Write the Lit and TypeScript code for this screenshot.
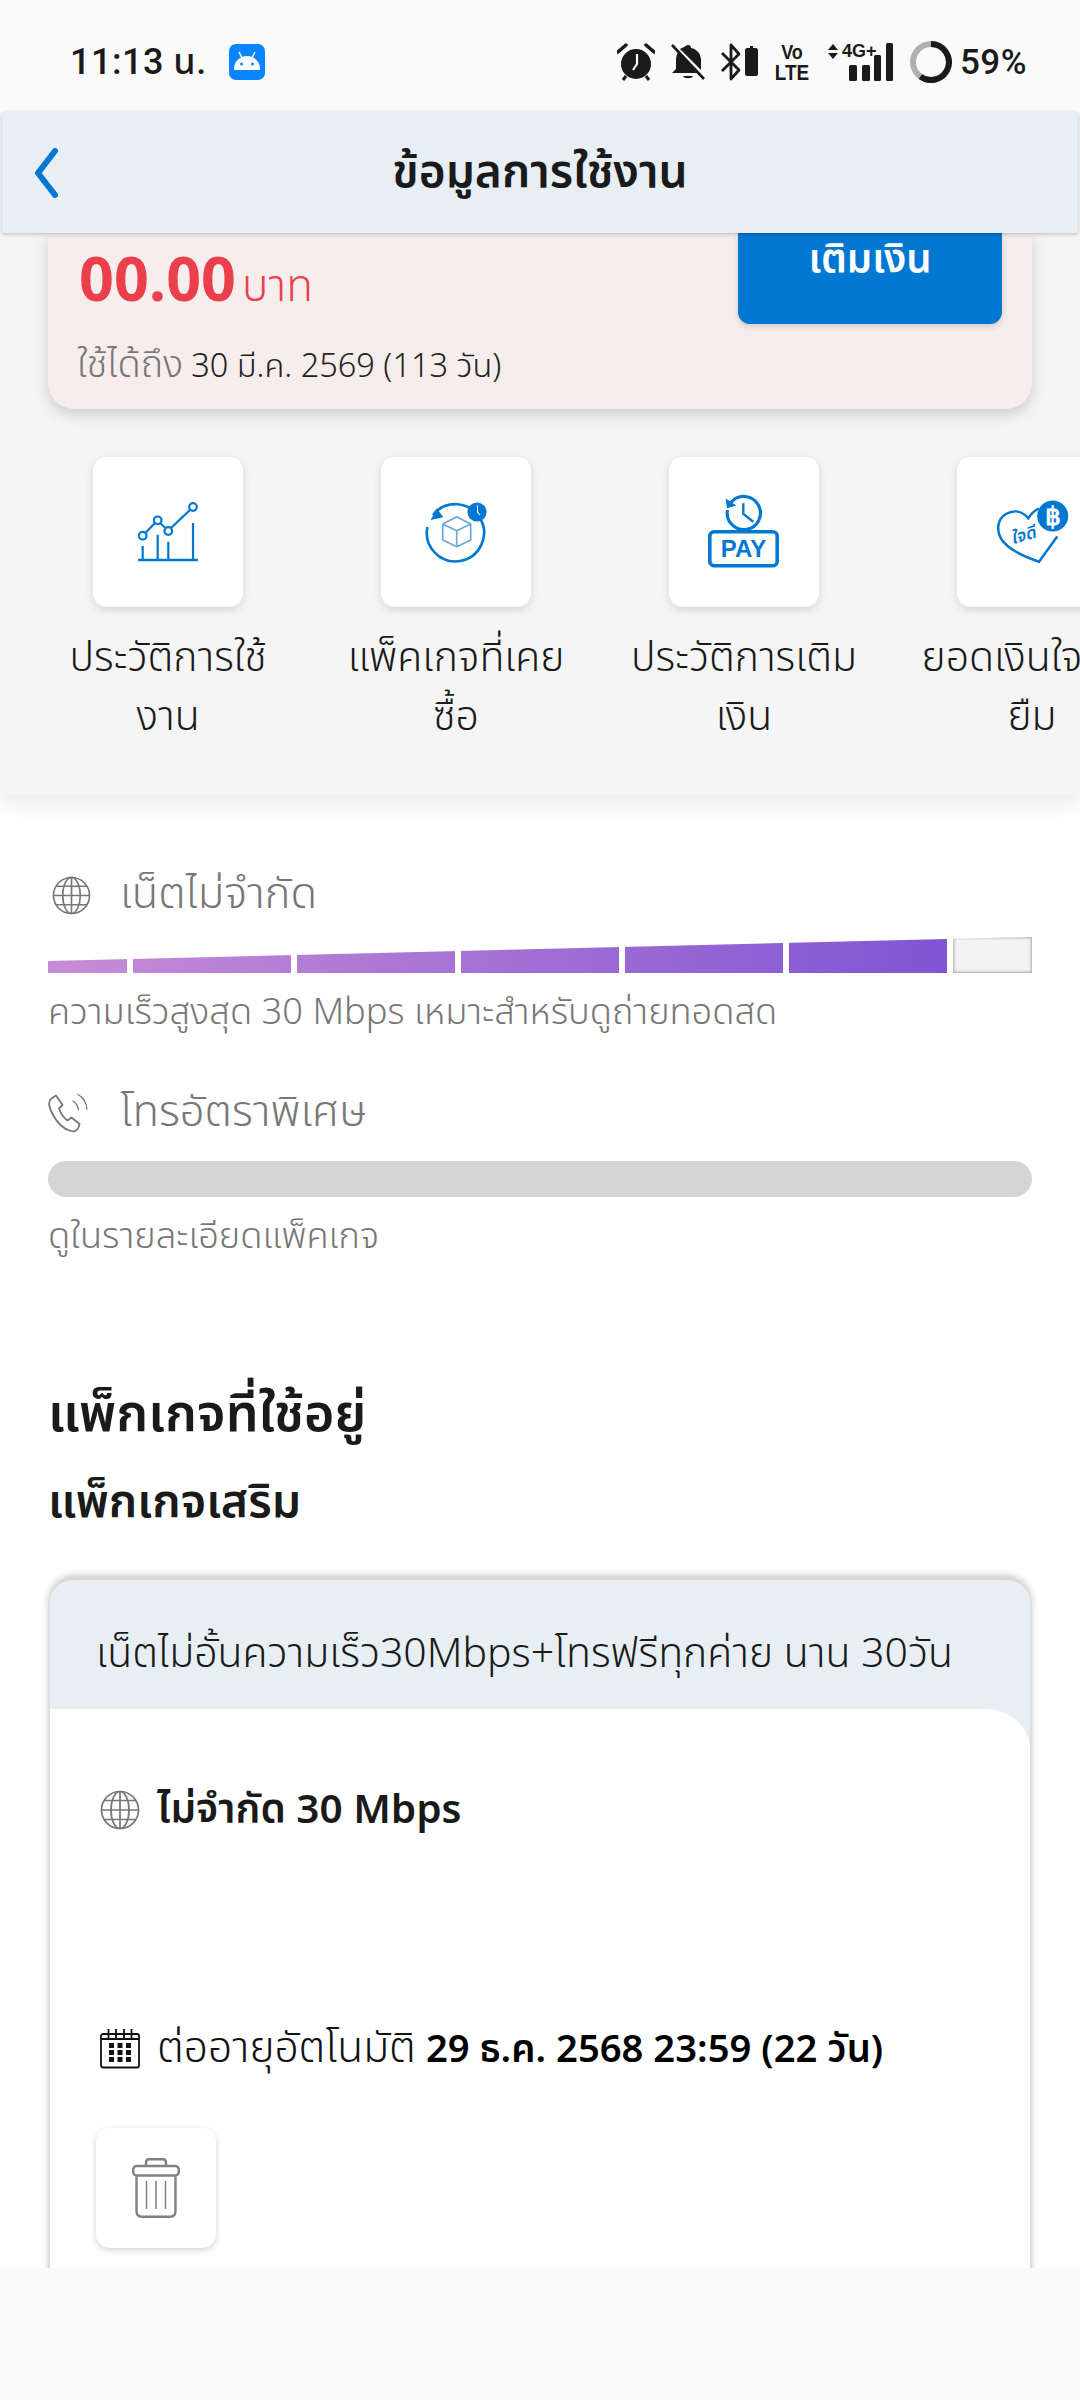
import { LitElement, html, css, svg } from "lit";
import { customElement } from "lit/decorators.js";

const BLUE = "#0078d2";

const globe = (size: number) => html`<svg class="ic" width=${size} height=${size} viewBox="0 0 40 40" fill="none" stroke="#777" stroke-width="1.7">
  <circle cx="20" cy="20" r="18.5"/><ellipse cx="20" cy="20" rx="9" ry="18.5"/><path d="M20 1.5v37M1.5 20h37M4 10.5h32M4 29.500h32"/></svg>`;

const phone = html`<svg class="ic" width="42" height="40" viewBox="0 0 42 40" fill="none" stroke="#777" stroke-width="1.8" stroke-linejoin="round" stroke-linecap="round">
  <path d="M8 2.5 L3.5 5.5 C0 8 1 14 4 20 C8 28 15 36 23 38 C27 39 30 37 31 33 L31.5 31 L23.5 24.5 L19.5 27.5 C16 25 12.5 20 11 15.5 L14.5 12 Z"/>
  <path d="M25 8 C28 10 30 13 30.5 17M30 1.5 C35 4 38.5 10 39 16" stroke-width="1.3"/></svg>`;

const chartIcon = html`<svg width="60" height="60" viewBox="0 0 60 60" fill="none" stroke=${BLUE} stroke-width="2.2">
  <path d="M0 58h60" stroke-width="2.6"/><path d="M4.7 44v14M19.7 32.7V58M30.3 39.7V58M55 21v37"/>
  <path d="M7.4 31 17 21M22 21 27.8 26.3M33 26 52.3 7.6"/>
  <circle cx="4.7" cy="33.7" r="3.8" fill="#fff"/><circle cx="19.7" cy="18.3" r="3.8" fill="#fff"/><circle cx="30.3" cy="29" r="3.8" fill="#fff"/><circle cx="55" cy="5" r="3.8" fill="#fff"/></svg>`;

const pkgIcon = html`<svg width="70" height="70" viewBox="0 0 70 70" fill="none">
  <path d="M12 18 A28.6 28.6 0 1 1 6.4 30" stroke=${BLUE} stroke-width="2.6"/>
  <path d="M9.7 23 15.7 11.3 22.3 20.3Z" fill=${BLUE}/>
  <circle cx="56" cy="15" r="9.6" fill=${BLUE}/><path d="M56.5 8.5v6.5l2.5 3" stroke="#fff" stroke-width="1.1"/>
  <path d="M35.7 19.7 49.7 27 35.7 33.7 21.7 27ZM21.7 27v16l14 6.7 14-6.7V27M35.7 33.7v16" stroke="#6aa8dd" stroke-width="1.7" stroke-linejoin="round"/></svg>`;

const payIcon = html`<svg width="80" height="80" viewBox="0 0 80 80" fill="none">
  <path d="M27 10.5 A16.6 16.6 0 1 1 23.5 18" stroke=${BLUE} stroke-width="3.2"/>
  <path d="M21.6 6.6 23 16.2 32.2 13.4Z" fill=${BLUE}/>
  <path d="M39.3 11.3V22l10 7.7" stroke=${BLUE} stroke-width="2.4"/>
  <rect x="5.8" y="39.8" width="67.4" height="34" rx="4.5" fill="#fff" stroke=${BLUE} stroke-width="3.6"/>
  <text x="39.5" y="65" text-anchor="middle" class="pay">PAY</text></svg>`;

const heartIcon = html`<svg width="90" height="90" viewBox="0 0 90 90" fill="none">
  <path d="M69.7 50.3 52 74.7 C38 70 22 63 15 53 C9 44 10 32 19 27 C28 22 36 25 41.3 31.3 C44 27 47 24 51 22" stroke=${BLUE} stroke-width="2.5" stroke-linecap="round"/>
  <text x="36" y="54" text-anchor="middle" transform="rotate(-16 36 48)" class="jai">ใจดี</text>
  <circle cx="65.7" cy="29" r="15.5" fill=${BLUE}/>
  <text x="65.7" y="38" text-anchor="middle" class="baht">฿</text></svg>`;

const calendar = html`<svg class="ic" width="40" height="40" viewBox="0 0 40 40" fill="none" stroke="#111" stroke-width="1.8">
  <rect x="1" y="5" width="38" height="33.5" rx="2"/><path d="M1 10h38M8.5 0v9M16 0v9M24 0v9M31.5 0v9"/>
  <g fill="#111" stroke="none">${[14, 21, 28].map((y) => [9, 17.5, 26].map((x) => svg`<rect x=${x} y=${y} width="5" height="5"/>`))}</g></svg>`;

const trash = html`<svg width="48" height="60" viewBox="0 0 48 60" fill="none" stroke="#808080" stroke-width="2.4">
  <path d="M14 8V4.5C14 2.5 15 1.2 17 1.2H31C33 1.2 34 2.5 34 4.5V8"/>
  <rect x="1.2" y="8" width="45.6" height="9.5" rx="3.5"/>
  <path d="M4.5 17.5V53C4.5 56.5 6.5 58.8 10 58.8H38C41.5 58.8 43.5 56.5 43.5 53V17.5"/>
  <path d="M14.5 23V51M24 23V51M33.5 23V51" stroke-width="1.5"/></svg>`;

const tiles = [
  { icon: chartIcon, l: ["ประวัติการใช้", "งาน"] },
  { icon: pkgIcon, l: ["แพ็คเกจที่เคย", "ซื้อ"] },
  { icon: payIcon, l: ["ประวัติการเติม", "เงิน"] },
  { icon: heartIcon, l: ["ยอดเงินใจดีให้", "ยืม"] },
];

const segs = [79, 158, 158, 158, 158, 158];

@customElement("app-root")
export class AppRoot extends LitElement {
  static styles = css`
    :host { display: block; width: 1080px; height: 2400px; overflow: hidden; background: #fafafa; color: #1a1a1a;
      font-family: "Noto Sans Thai", "Noto Sans", Roboto, sans-serif; }
    .app { display: flex; flex-direction: column; height: 2400px; }
    svg { display: block; flex: none; }
    .status { height: 112px; flex: none; display: flex; align-items: center; padding: 12px 53px 0 70px; background: #fafafa; box-sizing: border-box; }
    .time { font: 500 36px/1 Roboto, "Noto Sans Thai", sans-serif; letter-spacing: .5px; }
    .droid { margin-left: 22px; }
    .sright { margin-left: auto; display: flex; align-items: center; }
    .pct { font: 500 35px/1 Roboto, sans-serif; margin-left: 8px; letter-spacing: .5px; }
    .volte { font: 700 21px/21px "Liberation Sans", sans-serif; text-align: center; width: 34px; margin-left: 17px; transform: scaleX(.86); }
    .volte div { font-size: 22px; line-height: 21px; margin-left: -3px; margin-right: -3px; }
    .net { position: relative; width: 66px; height: 38px; margin-left: 18px; }
    .net .g { position: absolute; left: 15px; top: -2px; font: 700 18px/20px "Liberation Sans", sans-serif; }
    .net svg { position: absolute; left: 0; top: 0; }
    .hdr { position: relative; z-index: 3; flex: none; height: 121px; margin: 0 2px; background: #e7eef4; border-radius: 3px;
      box-shadow: 0 1px 4px rgba(0,0,0,.25); display: flex; align-items: center; justify-content: center; }
    .hdr svg { position: absolute; left: 30px; top: 36px; }
    .hdr h1 { margin: 0; font-size: 46px; font-weight: 600; line-height: 60px; }
    .scroll { flex: 1; min-height: 0; overflow: hidden; background: #fff; }
    .top { background: #f5f5f5; height: 562px; box-shadow: 0 8px 22px rgba(0,0,0,.09); position: relative; box-sizing: border-box; }
    .bal { margin: 0 48px; height: 176px; box-sizing: border-box; background: #f7eded; border-radius: 0 0 26px 26px; box-shadow: 0 6px 14px rgba(0,0,0,.16);
      display: flex; justify-content: space-between; padding: 0 30px 0 28px; }
    .amt { display: flex; align-items: baseline; height: 90px; padding: 5px 0 0 3px; }
    .amt b { font-size: 61px; line-height: 88px; font-weight: 700; color: #ec3f4c; }
    .amt span { font-size: 44px; color: #ec3f4c; margin-left: 6px; font-weight: 300; }
    .exp { font-size: 38px; line-height: 50px; margin-top: 13px; margin-left: 1px; font-weight: 300; color: #222; white-space: nowrap; }
    .exp i { font-style: normal; color: #777; }
    .exp span { font-size: 32.5px; margin-left: 8px; }
    .topup { width: 264px; height: 91px; background: ${css([BLUE] as any)}; border-radius: 0 0 12px 12px; color: #fff; font-size: 40px; font-weight: 600; text-align: center; line-height: 56px; box-shadow: 0 3px 6px rgba(0,0,0,.15); }
    .tiles { display: flex; padding: 48px 0 24px 24px; overflow: hidden; }
    .item { flex: none; width: 288px; display: flex; flex-direction: column; align-items: center; }
    .tile { width: 150px; height: 150px; background: #fff; border-radius: 14px; box-shadow: 0 3px 9px rgba(0,0,0,.13); display: flex; align-items: center; justify-content: center; }
    .lbl { margin-top: 22px; font-size: 41px; line-height: 59px; text-align: center; white-space: nowrap; font-weight: 300; }
    .pay { font: 700 24px "Liberation Sans", sans-serif; fill: ${css([BLUE] as any)}; }
    .jai { font-size: 17px; font-weight: 600; fill: ${css([BLUE] as any)}; font-style: italic; }
    .baht { font: 700 25px "Liberation Sans", sans-serif; fill: #fff; }
    .usage { padding: 70px 48px 0; }
    .urow { display: flex; align-items: center; height: 60px; color: #777; font-size: 43.5px; font-weight: 300; }
    .urow .slot { width: 72px; flex: none; }
    .urow .slot svg { margin-left: 4px; }
    .urow .slot.ph svg { margin-left: 0; }
    .meter { margin-top: 12px; height: 36px; display: flex; gap: 6px; clip-path: polygon(0 66.7%, 100% 0, 100% 100%, 0 100%); }
    .seg { height: 100%; flex: none; background-image: linear-gradient(90deg, #c88cd6, #7850d3); background-size: 984px 100%; }
    .seg.empty { flex: 1; background: #f3f3f3; box-shadow: inset 0 0 3px 1px rgba(0,0,0,.3); }
    .desc { font-size: 36.3px; line-height: 50px; margin-top: 15px; color: #777; font-weight: 300; white-space: nowrap; }
    .urow.second { margin-top: 45px; }
    .gbar { margin-top: 18px; height: 36px; border-radius: 18px; background: #d5d5d5; }
    h2 { margin: 118px 0 0; font-size: 52px; line-height: 70px; font-weight: 600; }
    h3 { margin: 23px 0 0; font-size: 46.3px; line-height: 60px; font-weight: 600; }
    .pk { margin: 44px 2px 0; background: #e7eef4; border-top: 3px solid #d8d8d8; border-radius: 24px 24px 0 0; box-shadow: 0 0 10px rgba(0,0,0,.3); height: 800px; }
    .pk-t { height: 129px; box-sizing: border-box; padding: 18px 0 0 46px; display: flex; align-items: center; font-size: 41px; font-weight: 300; white-space: nowrap; }
    .pk-b { background: #fff; border-radius: 0 45px 0 0 / 0 40px 0 0; height: 700px; padding: 0 46px; }
    .li { display: flex; align-items: center; gap: 17px; height: 60px; margin-left: 4px; font-size: 40.5px; white-space: nowrap; }
    .li b { font-weight: 600; }
    .li.a { padding-top: 71px; }
    .li.b { margin-top: 179px; font-weight: 300; color: #111; font-size: 42.5px; }
    .li.b b { color: #000; font-size: 38.2px; margin-left: -1px; }
    .del { margin-top: 49px; width: 120px; height: 120px; border-radius: 14px; background: #fff; box-shadow: 0 2px 7px rgba(0,0,0,.18); display: flex; align-items: center; justify-content: center; }
    .nav { height: 132px; flex: none; background: #fafafa; position: relative; z-index: 2; }
  `;

  render() {
    let x = 0;
    return html`<div class="app">
      <div class="status">
        <span class="time">11:13 น.</span>
        <svg class="droid" width="36" height="36" viewBox="0 0 36 36"><rect width="36" height="36" rx="7" fill="#0a84ff"/>
          <path d="M5 24a13 13 0 0 1 26 0Z" fill="#fff" transform="translate(0,1)"/><rect x="5" y="22" width="26" height="4" fill="#fff"/><path d="M10 8l3 6M26 8l-3 6" stroke="#fff" stroke-width="1.5"/><circle cx="12.5" cy="20" r="1.5" fill="#0a84ff"/><circle cx="23.5" cy="20" r="1.5" fill="#0a84ff"/></svg>
        <div class="sright">
          <svg width="38" height="38" viewBox="0 0 38 38"><circle cx="19" cy="21" r="15" fill="#1a1a1a"/><path d="M20 11v10l-4 6" stroke="#fafafa" stroke-width="2.2" fill="none"/><path d="M1 9 9 2M37 9 29 2" stroke="#1a1a1a" stroke-width="3.5" stroke-linecap="round"/><path d="M9 33l-3 4M29 33l3 4" stroke="#1a1a1a" stroke-width="3"/></svg>
          <svg style="margin-left:15px" width="36" height="38" viewBox="0 0 36 38" fill="#1a1a1a"><path d="M18 2c-2 0-3 1.500-3 3-6 1-9 6-9 12v9l-4 4h27L8 9"/><path d="M10 6 31 27V17c0-6-4-11-10-12 0-2-1-3-3-3"/><path d="M13 33h10c-1 3-9 3-10 0Z"/><path d="M2 2l32 34" stroke="#1a1a1a" stroke-width="2.6" fill="none"/></svg>
          <svg style="margin-left:15px" width="37" height="38" viewBox="0 0 37 38" fill="none"><path d="M1 10 18 27 10 36V2l8 9L1 28" stroke="#1a1a1a" stroke-width="2.8" stroke-linejoin="round"/><path d="M26 5h3V3h3v2h3c1 0 2 1 2 2v24c0 1-1 2-2 2H26c-1 0-2-1-2-2V7c0-1 1-2 2-2Z" fill="#1a1a1a"/></svg>
          <div class="volte">Vo<div>LTE</div></div>
          <div class="net">
            <svg width="66" height="38" viewBox="0 0 66 38" fill="#1a1a1a"><path d="M1 7l5-6 5 6ZM1 10l5 6 5-6Z"/><rect x="22" y="22" width="8" height="16" rx="1.500"/><rect x="35" y="22" width="8" height="16" rx="1.500"/><rect x="47" y="12" width="7" height="26" rx="1.500"/><rect x="59" y="0" width="7" height="38" rx="1.500"/></svg>
            <span class="g">4G+</span>
          </div>
          <svg style="margin-left:17px" width="42" height="42" viewBox="0 0 42 42" fill="none" stroke-width="6"><circle cx="21" cy="21" r="18" stroke="#b0b0b0"/><path d="M21 3A18 18 0 1 1 10.400 35.600" stroke="#1a1a1a"/></svg>
          <span class="pct">59%</span>
        </div>
      </div>
      <div class="hdr">
        <svg width="30" height="50" viewBox="0 0 30 50" fill="none"><path d="M23 3 6 25l17 22" stroke=${BLUE} stroke-width="6" stroke-linecap="round" stroke-linejoin="round"/></svg>
        <h1>ข้อมูลการใช้งาน</h1>
      </div>
      <div class="scroll">
        <div class="top">
          <div class="bal">
            <div>
              <div class="amt"><b>00.00</b><span>บาท</span></div>
              <div class="exp"><i>ใช้ได้ถึง</i><span>30 มี.ค. 2569 (113 วัน)</span></div>
            </div>
            <div class="topup">เติมเงิน</div>
          </div>
          <div class="tiles">
            ${tiles.map((t) => html`<div class="item"><div class="tile">${t.icon}</div><div class="lbl">${t.l[0]}<br />${t.l[1]}</div></div>`)}
          </div>
        </div>
        <div class="usage">
          <div class="urow"><div class="slot">${globe(39)}</div>เน็ตไม่จำกัด</div>
          <div class="meter">
            ${segs.map((w) => { const s = html`<div class="seg" style="width:${w}px;background-position:${-x}px 0"></div>`; x += w + 6; return s; })}
            <div class="seg empty"></div>
          </div>
          <div class="desc">ความเร็วสูงสุด 30 Mbps เหมาะสำหรับดูถ่ายทอดสด</div>
          <div class="urow second"><div class="slot ph">${phone}</div>โทรอัตราพิเศษ</div>
          <div class="gbar"></div>
          <div class="desc">ดูในรายละเอียดแพ็คเกจ</div>
          <h2>แพ็กเกจที่ใช้อยู่</h2>
          <h3>แพ็กเกจเสริม</h3>
          <div class="pk">
            <div class="pk-t">เน็ตไม่อั้นความเร็ว30Mbps+โทรฟรีทุกค่าย นาน 30วัน</div>
            <div class="pk-b">
              <div class="li a">${globe(40)}<b>ไม่จำกัด 30 Mbps</b></div>
              <div class="li b">${calendar}<span>ต่ออายุอัตโนมัติ <b>29 ธ.ค. 2568 23:59 (22 วัน)</b></span></div>
              <div class="del">${trash}</div>
            </div>
          </div>
        </div>
      </div>
      <div class="nav"></div>
    </div>`;
  }
}
